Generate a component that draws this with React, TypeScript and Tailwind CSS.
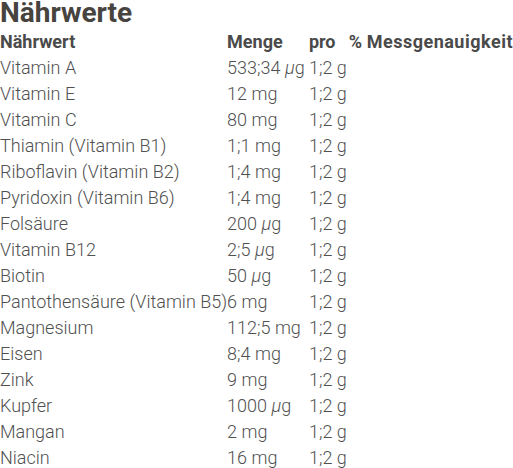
import React from "react";

const Mu = () => <i>μ</i>;

const rows: [string, React.ReactNode][] = [
  ["Vitamin A", <>533;34 <Mu />g</>],
  ["Vitamin E", "12 mg"],
  ["Vitamin C", "80 mg"],
  ["Thiamin (Vitamin B1)", "1;1 mg"],
  ["Riboflavin (Vitamin B2)", "1;4 mg"],
  ["Pyridoxin (Vitamin B6)", "1;4 mg"],
  ["Folsäure", <>200 <Mu />g</>],
  ["Vitamin B12", <>2;5 <Mu />g</>],
  ["Biotin", <>50 <Mu />g</>],
  ["Pantothensäure (Vitamin B5)", "6 mg"],
  ["Magnesium", "112;5 mg"],
  ["Eisen", "8;4 mg"],
  ["Zink", "9 mg"],
  ["Kupfer", <>1000 <Mu />g</>],
  ["Mangan", "2 mg"],
  ["Niacin", "16 mg"],
];

export default function App() {
  return (
    <div className="bg-white text-[#4a4a4a]" style={{ fontFamily: "Roboto, 'Liberation Sans', sans-serif" }}>
      <h1 className="text-[28px] font-bold leading-[26px] mb-[3px] text-[#47433f]">Nährwerte</h1>
      <table className="border-collapse text-[18px] leading-[26px]">
        <thead>
          <tr className="text-left font-bold">
            <th className="p-0 font-bold">Nährwert</th>
            <th className="p-0 font-bold w-[82px]">Menge</th>
            <th className="p-0 font-bold w-[40px]">pro</th>
            <th className="p-0 font-bold whitespace-nowrap tracking-[0.5px]">
              <span className="mr-[4px]">%</span>Messgenauigkeit
            </th>
          </tr>
        </thead>
        <tbody className="font-light text-[#505050]">
          {rows.map(([n, m], i) => (
            <tr key={i}>
              <td className="p-0 whitespace-nowrap">{n}</td>
              <td className="p-0 whitespace-nowrap">{m}</td>
              <td className="p-0 whitespace-nowrap">1;2 g</td>
              <td className="p-0"></td>
            </tr>
          ))}
        </tbody>
      </table>
    </div>
  );
}
